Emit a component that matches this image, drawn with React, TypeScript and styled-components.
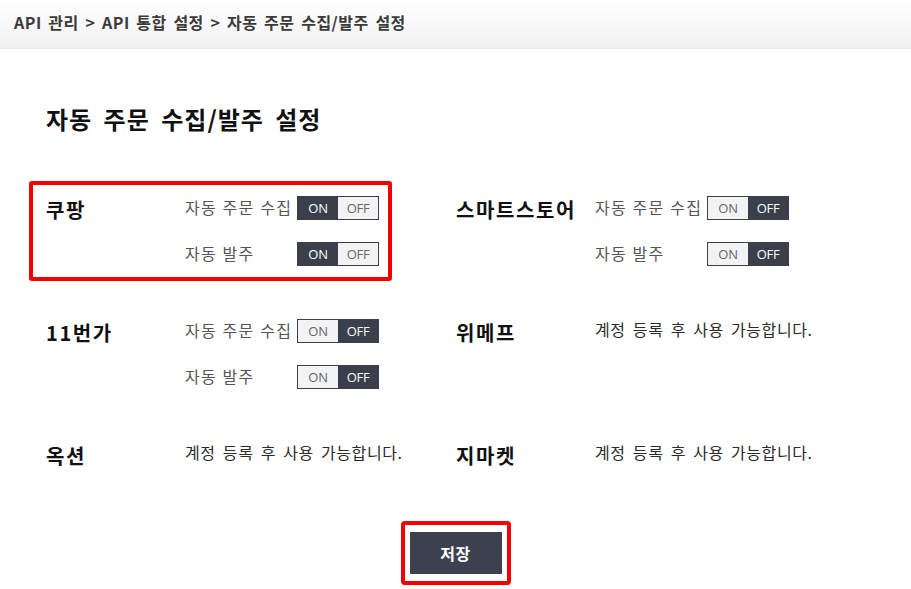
import React from 'react';
import styled, { createGlobalStyle } from 'styled-components';

const GlobalStyle = createGlobalStyle`
  html, body {
    margin: 0;
    padding: 0;
    background: #fff;
  }

  body {
    font-family: 'Noto Sans CJK KR', 'Noto Sans', sans-serif;
    color: #111;
  }
`;

const StyledPage = styled.div`
  width: 911px;
  min-height: 589px;
`;

const StyledHeader = styled.header`
  display: flex;
  align-items: center;
  height: 49px;
  padding-left: 14px;
  padding-bottom: 4px;
  border-bottom: 1px solid #e8e8e8;
  background: linear-gradient(to bottom, #ffffff 0%, #f1f1f1 100%);
  box-sizing: border-box;
  font-size: 16px;
  font-weight: 600;
  letter-spacing: 0.5px;
  word-spacing: 2.5px;
  color: #3a3a3a;
`;

const StyledMain = styled.main`
  padding: 54px 0 0 46px;
`;

const StyledTitle = styled.h1`
  margin: 0;
  font-size: 24px;
  line-height: 32px;
  font-weight: 700;
  letter-spacing: 1px;
  word-spacing: 5px;
`;

const StyledGrid = styled.div`
  display: grid;
  grid-template-columns: 410px 410px;
  row-gap: 53px;
  margin-top: 61px;
`;

const StyledBlock = styled.section<{ $highlight?: boolean }>`
  position: relative;
  display: grid;
  grid-template-columns: 139px 112px 82px;
  grid-auto-rows: 24px;
  row-gap: 22px;
  align-self: start;
  width: 333px;

  ${({ $highlight }) => $highlight && `
    &::after {
      position: absolute;
      top: -15px;
      left: -17px;
      right: -13px;
      bottom: -15px;
      content: '';
      border: 4px solid #f50000;
      border-radius: 3px;
    }
  `}
`;

const StyledName = styled.h2<{ $rows: number }>`
  grid-row: 1 / span ${({ $rows }) => $rows};
  margin: 0;
  padding-top: 2px;
  font-size: 20px;
  line-height: 24px;
  font-weight: 700;
  letter-spacing: 1.6px;
  white-space: nowrap;
`;

const StyledLabel = styled.span`
  font-size: 16px;
  line-height: 22px;
  letter-spacing: 1.2px;
  word-spacing: 1px;
  color: #555;
  white-space: nowrap;
`;

const StyledNotice = styled.span`
  grid-column: 2 / span 2;
  font-size: 16px;
  line-height: 20px;
  letter-spacing: 0.6px;
  word-spacing: 3px;
  color: #2a2a2a;
  white-space: nowrap;
`;

const StyledToggle = styled.div`
  display: flex;
  width: 82px;
  height: 24px;
  border: 1px solid #3b3e4b;
  box-sizing: border-box;
`;

const StyledToggleSide = styled.span<{ $active: boolean }>`
  flex: 1;
  display: flex;
  align-items: center;
  justify-content: center;
  font-family: 'Open Sans', 'Noto Sans', sans-serif;
  font-size: 13px;
  letter-spacing: -0.3px;
  background: ${({ $active }) => ($active ? '#3b3e4b' : '#f3f3f6')};
  color: ${({ $active }) => ($active ? '#fff' : '#666')};
`;

const StyledFooter = styled.div`
  display: flex;
  justify-content: center;
  padding-top: 66px;
  margin-left: -46px;
`;

const StyledSaveButton = styled.button`
  position: relative;
  width: 92px;
  height: 42px;
  border: 0;
  background: #3d414f;
  color: #fff;
  font-family: inherit;
  font-size: 16px;
  font-weight: 700;
  letter-spacing: 0.5px;

  &::after {
    position: absolute;
    top: -11px;
    left: -9px;
    right: -9px;
    bottom: -11px;
    content: '';
    border: 4px solid #f50000;
    border-radius: 4px;
  }
`;

type Setting = { label: string; on: boolean };

type Platform = {
  name: string;
  settings?: Setting[];
  highlight?: boolean;
};

const platforms: Platform[] = [
  {
    name: '쿠팡',
    highlight: true,
    settings: [
      { label: '자동 주문 수집', on: true },
      { label: '자동 발주', on: true },
    ],
  },
  {
    name: '스마트스토어',
    settings: [
      { label: '자동 주문 수집', on: false },
      { label: '자동 발주', on: false },
    ],
  },
  {
    name: '11번가',
    settings: [
      { label: '자동 주문 수집', on: false },
      { label: '자동 발주', on: false },
    ],
  },
  { name: '위메프' },
  { name: '옥션' },
  { name: '지마켓' },
];

const Toggle = ({ on }: { on: boolean }) => (
  <StyledToggle>
    <StyledToggleSide $active={on}>ON</StyledToggleSide>
    <StyledToggleSide $active={!on}>OFF</StyledToggleSide>
  </StyledToggle>
);

export default function App() {
  return (
    <StyledPage>
      <GlobalStyle />
      <StyledHeader>API 관리 &gt; API 통합 설정 &gt; 자동 주문 수집/발주 설정</StyledHeader>

      <StyledMain>
        <StyledTitle>자동 주문 수집/발주 설정</StyledTitle>

        <StyledGrid>
          {platforms.map((platform) => (
            <StyledBlock key={platform.name} $highlight={platform.highlight}>
              <StyledName $rows={platform.settings ? platform.settings.length : 1}>
                {platform.name}
              </StyledName>
              {platform.settings ? (
                platform.settings.map((setting) => (
                  <React.Fragment key={setting.label}>
                    <StyledLabel>{setting.label}</StyledLabel>
                    <Toggle on={setting.on} />
                  </React.Fragment>
                ))
              ) : (
                <StyledNotice>계정 등록 후 사용 가능합니다.</StyledNotice>
              )}
            </StyledBlock>
          ))}
        </StyledGrid>

        <StyledFooter>
          <StyledSaveButton type="button">저장</StyledSaveButton>
        </StyledFooter>
      </StyledMain>
    </StyledPage>
  );
}
